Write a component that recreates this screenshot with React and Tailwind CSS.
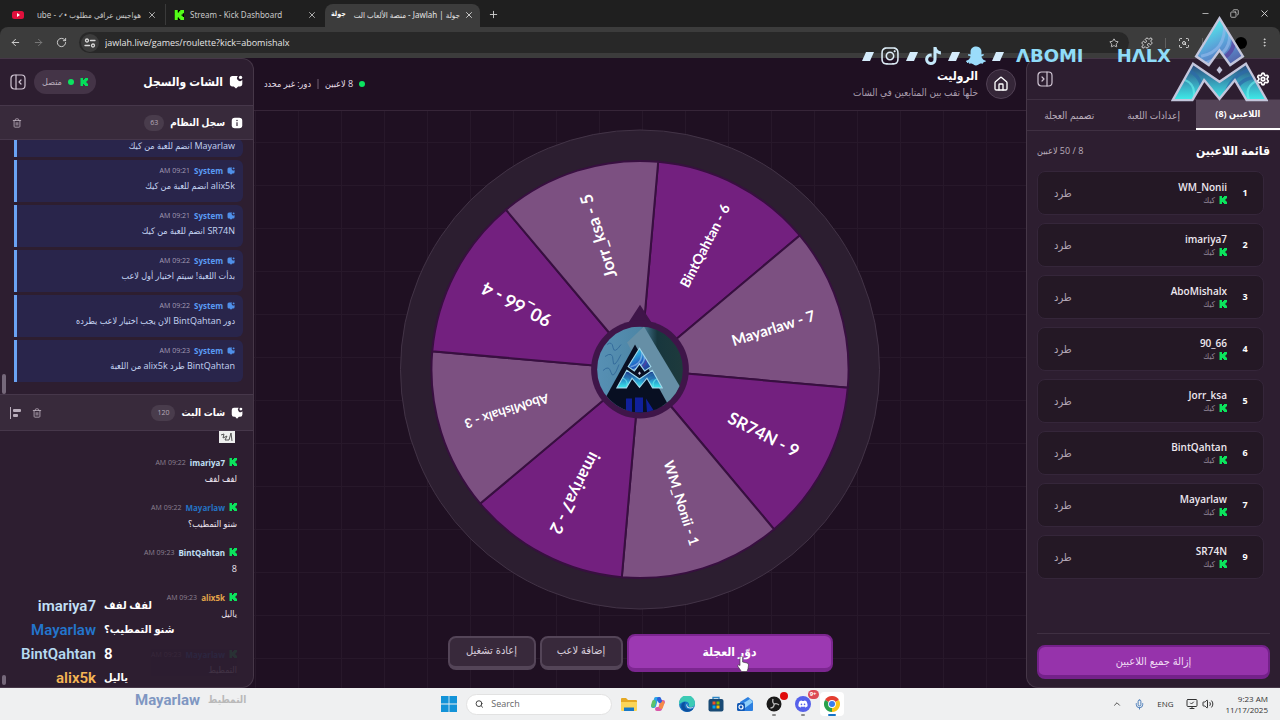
import React from "react";
import {
  ArrowLeft, ArrowRight, RotateCw, X, Plus, Minus, Copy, Star, Puzzle, EllipsisVertical,
  Trash2, House, Search, ChevronUp, Mic, Volume2, Settings, ScanSearch, MonitorCheck,
} from "lucide-react";
import { FaSnapchatGhost, FaTiktok, FaInstagram, FaDiscord } from "react-icons/fa";

const players = [
  { n: 1, name: "WM_Nonii" },
  { n: 2, name: "imariya7" },
  { n: 3, name: "AboMishalx" },
  { n: 4, name: "90_66" },
  { n: 5, name: "Jorr_ksa" },
  { n: 6, name: "BintQahtan" },
  { n: 7, name: "Mayarlaw" },
  { n: 9, name: "SR74N" },
];

const logs = [
  { text: "Mayarlaw انضم للعبة من كيك" },
  { time: "09:21 AM", text: "alix5k انضم للعبة من كيك" },
  { time: "09:21 AM", text: "SR74N انضم للعبة من كيك" },
  { time: "09:22 AM", text: "بدأت اللعبة! سيتم اختيار أول لاعب" },
  { time: "09:22 AM", text: "دور BintQahtan الان يجب اختيار لاعب يطرده" },
  { time: "09:23 AM", text: "BintQahtan طرد alix5k من اللعبة" },
];

const chat = [
  { name: "imariya7", time: "09:22 AM", text: "لفف لفف", color: "text-[#c3e0f7]" },
  { name: "Mayarlaw", time: "09:22 AM", text: "شنو التمطيب؟", color: "text-[#2473c4]" },
  { name: "BintQahtan", time: "09:23 AM", text: "8", color: "text-[#c3e0f7]" },
  { name: "alix5k", time: "09:23 AM", text: "ياليل", color: "text-[#e5a54a]" },
];

const overlay = [
  { name: "imariya7", text: "لفف لفف", color: "text-[#c3e0f7]" },
  { name: "Mayarlaw", text: "شنو التمطيب؟", color: "text-[#2375cc]" },
  { name: "BintQahtan", text: "8", color: "text-[#b5d9f0]", latin: true },
  { name: "alix5k", text: "ياليل", color: "text-[#f5b554]" },
];

const KickIcon = ({ className }) => (
  <svg viewBox="0 0 16 16" className={className} fill="currentColor" aria-hidden="true">
    <path d="M1 0h5v4h2V2h2V0h6v5h-2v2h-2v2h2v2h2v5h-6v-2H8v-2H6v4H1z" />
  </svg>
);

const ChatIcon = ({ className }) => (
  <svg viewBox="0 0 16 16" className={className} fill="currentColor" aria-hidden="true">
    <path d="M4 1h6.200a3 3 0 0 0 5 4.800V10a3 3 0 0 1-3 3h-1.700L8 15.500 5.500 13H4a3 3 0 0 1-3-3V4a3 3 0 0 1 3-3z" />
    <circle cx="13.200" cy="2.800" r="1.900" />
  </svg>
);

const InfoIcon = ({ className }) => (
  <svg viewBox="0 0 16 16" className={className} aria-hidden="true">
    <rect x="1" y="1" width="14" height="14" rx="4" fill="#fff" />
    <circle cx="8" cy="4.800" r="1" fill="#382a3b" />
    <rect x="7.200" y="7" width="1.600" height="5" fill="#382a3b" />
  </svg>
);

const PanelIcon = ({ className, flip }) => (
  <svg viewBox="0 0 16 16" className={className} fill="none" stroke="#cfc4d2" strokeWidth="1.200" strokeLinecap="round" strokeLinejoin="round" aria-hidden="true">
    <rect x="1" y="1" width="14" height="14" rx="3.500" />
    {flip ? <path d="M10 1v14M5 6l2 2-2 2" /> : <path d="M6 1v14M11 6L9 8l2 2" />}
  </svg>
);

const TuneIcon = () => (
  <svg viewBox="0 0 12 12" className="h-3 w-3" fill="none" stroke="currentColor" strokeWidth="1.300" strokeLinecap="round" aria-hidden="true">
    <circle cx="3" cy="3.500" r="1.500" /><path d="M6.500 3.500H11" />
    <circle cx="9" cy="8.500" r="1.500" /><path d="M1 8.500h4.500" />
  </svg>
);

const BrandLogo = ({ className, dark, id, ...rest }) => (
  <svg viewBox="0 0 290 256" className={className} aria-hidden="true" {...rest}>
    <defs>
      <linearGradient id={id + "t"} x1="0" y1="0" x2="1" y2="1">
        <stop offset="0.250" stopColor={dark ? "#35cfe8" : "#52f0ec"} />
        <stop offset="0.550" stopColor={dark ? "#1f63c4" : "#5b9bd6"} />
        <stop offset="0.900" stopColor={dark ? "#22307f" : "#514a96"} />
      </linearGradient>
      <linearGradient id={id + "b"} x1="0" y1="0" x2="0" y2="1">
        <stop offset="0.100" stopColor={dark ? "#1c3a8c" : "#2b5584"} />
        <stop offset="0.600" stopColor={dark ? "#2a9fd0" : "#3aaec4"} />
        <stop offset="1" stopColor="#3ff5ee" />
      </linearGradient>
      <clipPath id={id + "c"}><path d="M145 6l70 114-38 26-32-44-32 44-38-26z" /></clipPath>
      <clipPath id={id + "d"}><path d="M66 142l79 54 79-54 62 109h-60l-35-60-46 56-46-56-35 60H5z" /></clipPath>
    </defs>
    <g clipPath={`url(#${id}c)`}>
      <rect width="290" height="150" fill={`url(#${id}t)`} />
      <path d="M90 120Q165 105 160 20M105 140Q190 105 172 40" stroke="#8fb8ea" strokeWidth="9" fill="none" opacity="0.700" />
      <path d="M130 140Q200 110 185 60" stroke="#5a3f9e" strokeWidth="12" fill="none" opacity="0.700" />
    </g>
    <g clipPath={`url(#${id}d)`}>
      <rect y="140" width="290" height="116" fill={`url(#${id}b)`} />
      <path d="M50 160Q110 190 85 256M250 155Q180 170 160 240M275 185Q215 175 190 225" stroke="#2c6aa8" strokeWidth="10" fill="none" opacity="0.700" />
      <path d="M40 190Q80 205 65 256M262 190Q215 210 235 256" stroke="#6df5f0" strokeWidth="7" fill="none" opacity="0.600" />
    </g>
    <g fill="none" stroke={dark ? "#9fd6ea" : "#c3c6dc"} strokeWidth="7" strokeLinejoin="miter">
      <path d="M145 6l70 114-38 26-32-44-32 44-38-26z" />
      <path d="M66 142l79 54 79-54 62 109h-60l-35-60-46 56-46-56-35 60H5z" />
    </g>
    <path d="M145 150l9 11-9 11-9-11z" fill="#c3c6dc" />
  </svg>
);

const R = 209;
const pt = (deg, r) => {
  const a = (deg * Math.PI) / 180;
  return [241 + r * Math.cos(a), 241 + r * Math.sin(a)];
};

const segments = [
  { label: "BintQahtan - 6", start: -85, size: 14, fill: "#73207f" },
  { label: "Mayarlaw - 7", start: -40, size: 15, fill: "#7c5081" },
  { label: "SR74N - 9", start: 5, size: 17, fill: "#73207f" },
  { label: "WM_Nonii - 1", start: 50, size: 14, fill: "#7c5081" },
  { label: "imariya7 - 2", start: 95, size: 17, fill: "#73207f" },
  { label: "AboMishalx - 3", start: 140, size: 13, fill: "#7c5081" },
  { label: "90_66 - 4", start: 185, size: 18, fill: "#73207f" },
  { label: "Jorr_ksa - 5", start: 230, size: 17, fill: "#7c5081" },
];

const Wheel = () => (
  <svg viewBox="0 0 482 482" className="max-h-[482px] min-h-0 w-full flex-1" role="img" aria-label="عجلة اللاعبين">
    <circle cx="241" cy="241" r="240" fill="#2c1e30" stroke="#423346" strokeWidth="1" />
    {segments.map((s) => {
      const [x1, y1] = pt(s.start, R);
      const [x2, y2] = pt(s.start + 45, R);
      return (
        <path key={s.label} d={`M241 241L${x1} ${y1}A${R} ${R} 0 0 1 ${x2} ${y2}Z`} fill={s.fill} stroke="#380f40" strokeWidth="2" />
      );
    })}
    {segments.map((s) => {
      const a = s.start + 22.5;
      const [x, y] = pt(a, 140);
      return (
        <text key={s.label} x={x} y={y} transform={`rotate(${a} ${x} ${y})`} textAnchor="middle" dominantBaseline="central" direction="ltr" fontSize={s.size} fontWeight="700" fill="#fff" fontFamily="Lato, Inter, sans-serif">
          {s.label}
        </text>
      );
    })}
    <path d="M241 178l11 17h-22z" fill="#3f1549" stroke="#3f1549" strokeWidth="2" />
    <circle cx="241" cy="241" r="49" fill="#3f1549" />
    <defs>
      <clipPath id="hub"><circle cx="241" cy="241" r="43" /></clipPath>
      <linearGradient id="hubBg" x1="0" y1="0" x2="1" y2="0">
        <stop offset="0" stopColor="#5790b4" />
        <stop offset="0.500" stopColor="#4d86a6" />
        <stop offset="0.700" stopColor="#17363d" />
        <stop offset="1" stopColor="#1e3a3c" />
      </linearGradient>
    </defs>
    <g clipPath="url(#hub)">
      <rect x="198" y="198" width="86" height="86" fill="url(#hubBg)" />
      <path d="M245 198L281 258L267 284L228 214z" fill="#668fa6" />
      <path d="M236 216L206 270V286H272L268 274z" fill="#080f22" />
      <path d="M208 216q5-4 6 3t8-3M206 228q8-6 8 4t8-6M204 242q6-6 8 2t8-8" stroke="#356c9c" strokeWidth="1" fill="none" />
      <path d="M227 270h6v14h-6zM236 269h8v15h-8zM247 270l9 14h-8z" fill="#10209a" />
      <BrandLogo id="hubLogo" dark x="217" y="218" width="47" height="43" />
    </g>
  </svg>
);

const Tab = ({ children, className }) => (
  <div className={"flex items-center text-[10px] whitespace-nowrap text-[#c9c9c9] " + className}>{children}</div>
);

const BrowserChrome = () => (
  <header dir="ltr" className="shrink-0 bg-[#1f1f1f] font-['Noto_Sans','DejaVu_Sans_Condensed','DejaVu_Sans',sans-serif]">
    <div className="flex h-[27px] items-end justify-between">
      <div className="flex h-[23px] items-stretch pb-0.5">
        <Tab className="w-[165px] gap-1.5 pr-2 pl-3">
          <svg viewBox="0 0 12 10" className="h-2.5 w-3 shrink-0" aria-hidden="true">
            <rect y="1" width="12" height="8" rx="2.500" fill="#e0103c" />
            <path d="M5 3l3 2-3 2z" fill="#fff" />
          </svg>
          <span dir="rtl" className="flex-1 text-[8px]">هواجيس عراقي مطلوب •✓ - ube</span>
          <button aria-label="إغلاق علامة التبويب"><X size={10} /></button>
        </Tab>
        <Tab className="w-[160px] gap-1.5 border-l border-[#3a3a3a] px-2">
          <span className="flex h-2.5 w-2.5 items-center justify-center bg-black"><KickIcon className="h-2.5 w-2.5 text-[#53fc18]" /></span>
          <span className="flex-1 text-[8px]">Stream - Kick Dashboard</span>
          <button aria-label="إغلاق علامة التبويب"><X size={10} /></button>
        </Tab>
        <Tab className="-mb-0.5 w-[155px] gap-1 rounded-t-lg bg-[#3c3c3c] px-1.5 pb-0.5 text-[#e3e3e3]">
          <span className="text-[7px] font-bold text-white">جولة</span>
          <span dir="rtl" className="flex-1 text-[8px]">جولة | Jawlah - منصة الألعاب الت</span>
          <button aria-label="إغلاق علامة التبويب"><X size={10} /></button>
        </Tab>
        <button aria-label="علامة تبويب جديدة" className="px-2 text-[#d0d0d0]"><Plus size={11} /></button>
      </div>
      <div className="flex h-full items-center gap-5 pr-2.5 text-[#d8d8d8]">
        <button aria-label="تصغير"><Minus size={9} /></button>
        <button aria-label="استعادة"><Copy size={9} className="-scale-x-100" /></button>
        <button aria-label="إغلاق"><X size={11} /></button>
      </div>
    </div>
    <div className="flex h-[31px] items-center gap-3 rounded-t-lg bg-[#3c3c3c] px-2.5 text-[#d8d8d8]">
      <button aria-label="رجوع"><ArrowLeft size={11} /></button>
      <button aria-label="تقدم" className="text-[#7c7c7c]"><ArrowRight size={11} /></button>
      <button aria-label="تحديث"><RotateCw size={11} /></button>
      <div className="flex h-[21px] flex-1 items-center gap-1.5 rounded-full bg-[#282828] pr-2.5 pl-0.5">
        <span className="flex h-[18px] w-[18px] items-center justify-center rounded-full bg-[#3c3c3c]"><TuneIcon /></span>
        <input aria-label="شريط العنوان" readOnly value="jawlah.live/games/roulette?kick=abomishalx" className="min-w-0 flex-1 bg-transparent font-['Open_Sans',sans-serif] text-[9px] text-[#e6e6e6] outline-none" />
        <button aria-label="إضافة إشارة مرجعية"><Star size={10} /></button>
      </div>
      <div className="flex items-center gap-3">
        <button aria-label="الإضافات"><Puzzle size={12} /></button>
        <span className="h-2.5 w-px bg-[#606060]" />
        <button aria-label="بحث في الصفحة"><ScanSearch size={12} /></button>
        <span className="h-2.5 w-px bg-[#606060]" />
        <span className="ml-5 h-3 w-3 rounded-full bg-black" />
        <button aria-label="قائمة"><EllipsisVertical size={11} /></button>
      </div>
    </div>
  </header>
);

const SectionHeader = ({ icon, title, count, children, className }) => (
  <div className={"flex shrink-0 items-center justify-between border-[#46374a] bg-[#382a3b] px-2.5 " + className}>
    <div className="flex items-center gap-1.5">
      {icon}
      <h3 className="text-[10px] font-bold text-white">{title}</h3>
      <span className="rounded-full bg-[#493c4c] px-1.5 py-0.5 text-[7px] leading-3 text-[#b5aab8]">{count}</span>
    </div>
    <div className="flex items-center gap-2.5 text-[#b9adbb]">{children}</div>
  </div>
);

const ChatPanel = () => (
  <aside className="flex w-[254px] shrink-0 flex-col overflow-hidden rounded-r-xl border border-l-0 border-[#463748] bg-[#2d1e30]">
    <div className="flex h-[46px] shrink-0 items-center justify-between px-2.5">
      <div className="flex items-center gap-1.5">
        <ChatIcon className="h-3.5 w-3.5 text-white" />
        <h2 className="text-[12px] font-bold text-white">الشات والسجل</h2>
      </div>
      <div className="flex items-center gap-2">
        <div className="flex h-6 items-center gap-1.5 rounded-full bg-[#443447] px-2 text-[9px] text-[#b9adbb]">
          <KickIcon className="h-2 w-2 text-[#05df5a]" />
          <span className="h-1.5 w-1.5 rounded-full bg-[#0ce360]" />
          <span>متصل</span>
        </div>
        <button aria-label="طي اللوحة"><PanelIcon className="h-4 w-4" /></button>
      </div>
    </div>
    <SectionHeader className="h-[35px] border-y" icon={<InfoIcon className="h-3 w-3" />} title="سجل النظام" count="63">
      <button aria-label="مسح السجل" className="pl-0.5"><Trash2 size={10} /></button>
    </SectionHeader>
    <div className="relative flex h-[254px] shrink-0 flex-col justify-end gap-[3px] overflow-hidden pr-2.5 pb-3 pl-3.5">
      {logs.map((l, i) => (
        <div key={i} className={"flex shrink-0 flex-col gap-0.5 rounded-r-md border-l-[3px] border-[#6aa3f3] bg-[#29254b] px-2 text-[9px] leading-[13px] " + (l.time ? "h-[42px] pt-1" : "h-[18px]")}>
          {l.time && (
            <div className="flex items-center gap-1">
              <ChatIcon className="h-2 w-2 text-[#4f8fe8]" />
              <span className="text-[8px] font-bold text-[#5a9bf3]">System</span>
              <span className="text-[7px] text-[#a39bb5]">{l.time}</span>
            </div>
          )}
          <p className="whitespace-nowrap text-[#c5d4f2]">{l.text}</p>
        </div>
      ))}
      <span className="absolute bottom-0 left-0.5 h-5 w-1 rounded-full bg-[#75687a]" />
    </div>
    <SectionHeader className="h-[37px] border-y" icon={<ChatIcon className="h-3 w-3 text-white" />} title="شات البث" count="120">
      <button aria-label="مسح الشات"><Trash2 size={10} /></button>
      <button aria-label="محاذاة">
        <svg viewBox="0 0 12 12" className="h-3 w-3" fill="currentColor" aria-hidden="true">
          <rect x="0" y="0" width="1" height="12" />
          <rect x="3" y="2" width="8" height="3" rx="1" />
          <rect x="3" y="7" width="5" height="3" rx="1" />
        </svg>
      </button>
    </SectionHeader>
    <div className="relative min-h-0 flex-1 overflow-hidden px-4 text-[9px] leading-[13px]">
      <svg viewBox="0 0 16 12" className="mr-0.5 h-3 w-4" aria-hidden="true">
        <rect width="16" height="12" fill="#eee" />
        <path d="M2 4l3-1-1 4 4-2-2 4h4l2-7 1 8" stroke="#555" strokeWidth="1" fill="none" />
      </svg>
      <div className="flex flex-col gap-[14px] pt-3">
        {chat.map((m) => (
          <div key={m.name} className="flex flex-col gap-[3px]">
            <div className="flex h-[14px] items-center gap-1">
              <KickIcon className="h-2 w-2 text-[#0be35c]" />
              <span className={"text-[8px] font-bold " + m.color}>{m.name}</span>
              <span className="text-[7px] text-[#8c8090]">{m.time}</span>
            </div>
            <p className="h-[14px] text-[#ebe4ee]">{m.text}</p>
          </div>
        ))}
        <div className="flex flex-col gap-0.5 pt-3 opacity-10">
          <div className="flex h-[14px] items-center gap-1">
            <KickIcon className="h-2 w-2 text-[#0be35c]" />
            <span className="text-[8px] font-bold text-[#2473c4]">Mayarlaw</span>
            <span className="text-[7px] text-[#8c8090]">09:23 AM</span>
          </div>
          <p className="text-[#ebe4ee]">التمطيط</p>
        </div>
      </div>
      <span className="absolute bottom-0.5 left-0.5 h-2.5 w-1 rounded-full bg-[#75687a]" />
    </div>
  </aside>
);

const Game = () => (
  <main className="flex min-w-0 flex-1 flex-col bg-[#1f1022] bg-[linear-gradient(to_right,#27182a_1px,transparent_1px),linear-gradient(to_bottom,#27182a_1px,transparent_1px)] bg-size-[43px_43px] bg-position-[1px_-2px]">
    <div className="flex h-[53px] shrink-0 items-center justify-between border-b border-[#362538] bg-[#1f1022] px-2.5">
      <div className="flex items-center gap-2">
        <a href="#home" aria-label="الرئيسية" className="flex h-[30px] w-[30px] items-center justify-center rounded-full border border-[#514054] bg-[#352638] text-white"><House size={16} /></a>
        <div>
          <h1 className="text-[12px] leading-4 font-bold text-white">الروليت</h1>
          <p className="text-[10px] leading-4 text-[#a99dad]">خلها تقب بين المتابعين في الشات</p>
        </div>
      </div>
      <div className="flex items-center gap-1.5 text-[9px] text-[#e5dfe8]">
        <span className="h-1.5 w-1.5 rounded-full bg-[#0ce360]" />
        <span>8 لاعبين</span>
        <span className="h-2.5 w-0.5 bg-[#473749]" />
        <span>دور: غير محدد</span>
      </div>
    </div>
    <div className="flex min-h-0 flex-1 flex-col items-center justify-center pt-[18px]">
      <Wheel />
    </div>
    <div className="flex shrink-0 items-center justify-center gap-1 pt-6 pb-4">
      <button className="h-[38px] w-[206px] rounded-lg border-2 border-b-4 border-[#7c2690] bg-[#9c39b2] text-[12px] font-bold text-white">دوّر العجلة</button>
      <button className="h-[34px] w-[83px] rounded-lg border-2 border-b-4 border-[#544558] bg-[#38293b] pb-1 text-[11px] text-[#d8cfdb]">إضافة لاعب</button>
      <button className="h-[34px] w-[88px] rounded-lg border-2 border-b-4 border-[#544558] bg-[#38293b] pb-1 text-[11px] text-[#d8cfdb]">إعادة تشغيل</button>
    </div>
  </main>
);

const PlayersPanel = () => (
  <aside className="flex w-[254px] shrink-0 flex-col overflow-hidden rounded-l-xl border border-r-0 border-[#463748] bg-[#2d1e30]">
    <div className="flex h-[41px] shrink-0 items-center justify-between border-b border-[#3f3042] px-2.5">
      <button aria-label="الإعدادات" className="text-white"><Settings size={14} strokeWidth={3} /></button>
      <button aria-label="طي اللوحة"><PanelIcon flip className="h-4 w-4" /></button>
    </div>
    <div role="tablist" className="grid h-[31px] shrink-0 grid-cols-3 border-b border-[#3f3042] text-[10px] text-[#b9adbb]">
      <button role="tab" aria-selected="true" className="border-b-2 border-white bg-[#544457] text-[9px] font-bold text-white">اللاعبين (8)</button>
      <button role="tab" aria-selected="false">إعدادات اللعبة</button>
      <button role="tab" aria-selected="false">تصميم العجلة</button>
    </div>
    <div className="flex h-10 shrink-0 items-center justify-between px-2.5">
      <h2 className="text-[12px] font-bold text-white">قائمة اللاعبين</h2>
      <span className="text-[9px] text-[#b9adbb]">8 / 50 لاعبين</span>
    </div>
    <ul className="flex min-h-0 flex-1 flex-col gap-2 overflow-hidden pr-4 pl-2.5">
      {players.map((p) => (
        <li key={p.n} className="flex h-11 shrink-0 items-center rounded-lg border border-[#35263a] bg-[#241825] pr-3 pl-4">
          <span className="w-3 text-center text-[9px] font-bold text-white">{p.n}</span>
          <div className="mr-3 flex-1">
            <div dir="ltr" className="text-right font-['Open_Sans',sans-serif] text-[10px] leading-[13px] font-semibold text-[#eee8f0]">{p.name}</div>
            <div className="flex items-center gap-1 text-[8px] leading-3 text-[#94889a]"><KickIcon className="h-2 w-2 text-[#0be35c]" />كيك</div>
          </div>
          <button className="text-[11px] text-[#b0a4b3]">طرد</button>
        </li>
      ))}
    </ul>
    <div className="mx-2.5 shrink-0 border-t border-[#3f3042] pt-[11px] pb-2">
      <button className="h-[34px] w-full rounded-lg border-2 border-b-4 border-[#74218a] bg-[#9633ab] text-[11px] text-[#f0dcf4]">إزالة جميع اللاعبين</button>
    </div>
  </aside>
);

const Taskbar = () => (
  <footer dir="ltr" className="grid h-8 shrink-0 grid-cols-[1fr_auto_1fr] items-center bg-[#eff0f1] font-['Open_Sans',sans-serif] text-[#333]">
    <span />
    <div className="flex items-center gap-[13px]">
      <button aria-label="Start" className="-mr-1">
        <svg viewBox="0 0 16 16" className="h-4 w-4" fill="#1393d8" aria-hidden="true">
          <path d="M0 0h7.600v7.600H0zM8.400 0H16v7.600H8.400zM0 8.400h7.600V16H0zM8.400 8.400H16V16H8.400z" />
        </svg>
      </button>
      <label className="-mr-1 flex h-[21px] w-[146px] items-center gap-2 rounded-full border border-[#e2e2e2] bg-white px-2">
        <Search size={10} strokeWidth={2.5} />
        <input aria-label="Search" placeholder="Search" className="w-full bg-transparent text-[9px] outline-none placeholder:text-[#666]" />
      </label>
      <button aria-label="File Explorer">
        <svg viewBox="0 0 16 16" className="h-4 w-4" aria-hidden="true">
          <path d="M0 3a1 1 0 0 1 1-1h4l2 2h8a1 1 0 0 1 1 1v9H0z" fill="#e5a823" />
          <path d="M0 6h16v8a1 1 0 0 1-1 1H1a1 1 0 0 1-1-1z" fill="#fbd557" />
          <path d="M3 11.500h10V15H3z" fill="#1878c6" />
        </svg>
      </button>
      <button aria-label="Copilot">
        <svg viewBox="0 0 16 16" className="h-4 w-4" fill="none" strokeWidth="4" strokeLinecap="round" strokeLinejoin="round" aria-hidden="true">
          <path d="M9 3H6L4 10H3" stroke="#2aa3e8" />
          <path d="M3 9.500L4 6" stroke="#5cc26a" />
          <path d="M7 13h3l2-7h1" stroke="#d957a8" />
          <path d="M12.500 7L11 11" stroke="#f58a4b" />
          <path d="M9 3l1 2" stroke="#2f5fd8" />
        </svg>
      </button>
      <button aria-label="Edge">
        <svg viewBox="0 0 16 16" className="h-4 w-4" aria-hidden="true">
          <circle cx="8" cy="8" r="8" fill="#1573c4" />
          <path d="M0 7.500A8 8 0 0 1 16 7c0 3-2 4-4.500 4-2 0-2.500-.8-1.800-1.500C11 7 8 5 5.500 5.500 3 6 .5 7.500 0 9z" fill="#3ccbb5" />
          <path d="M5.500 9c0 4 4 5.500 9 3.500-3 4.500-10 4.500-12-.5C1.500 9 3 6 6.500 6 5.800 7 5.500 8 5.500 9z" fill="#0d4f9e" />
          <path d="M8.500 7.500c-1 2 0 4 3 4 1.500 0 3-.5 3.500-1-1 2.500-6.500 3-7.500-.5-.3-1 .2-2 1-2.500z" fill="#eff0f1" />
        </svg>
      </button>
      <button aria-label="Store">
        <svg viewBox="0 0 16 16" className="h-4 w-4" aria-hidden="true">
          <path d="M5 3V1.500h6V3" stroke="#2f87c8" strokeWidth="1.300" fill="none" />
          <rect x="0.500" y="3" width="15" height="12.500" rx="2" fill="#194a75" />
          <path d="M4.500 5.500h3v3h-3z" fill="#f25022" /><path d="M8.500 5.500h3v3h-3z" fill="#7fba00" />
          <path d="M4.500 9.500h3v3h-3z" fill="#00a4ef" /><path d="M8.500 9.500h3v3h-3z" fill="#ffb900" />
        </svg>
      </button>
      <button aria-label="Outlook">
        <svg viewBox="0 0 16 16" className="h-4 w-4" aria-hidden="true">
          <path d="M3 6l8-5 5 4v9a1 1 0 0 1-1 1H4z" fill="#2b7fe0" />
          <path d="M5 8l8-5 3 3-8 6z" fill="#8fd0fa" />
          <rect x="0" y="7" width="8" height="8" rx="1.500" fill="#1259b5" />
          <circle cx="4" cy="11" r="2" fill="none" stroke="#fff" strokeWidth="1.200" />
        </svg>
      </button>
      <button aria-label="OBS" className="relative">
        <svg viewBox="0 0 16 16" className="h-4 w-4" aria-hidden="true">
          <circle cx="8" cy="8" r="7.500" fill="#191919" />
          <path d="M7 3q-1 4 1.500 5M13 9q-3-2.500-5-.5M4.500 12q4-.5 3.500-4" stroke="#bbb" strokeWidth="1.300" fill="none" />
        </svg>
        <span className="absolute -top-1 -right-1.5 h-2 w-2 rounded-full bg-[#e00b0b]" />
        <span className="absolute -bottom-1 left-1.5 h-0.5 w-1 rounded-full bg-[#8a8a8a]" />
      </button>
      <button aria-label="Discord" className="relative">
        <span className="flex h-4 w-4 items-center justify-center rounded-full bg-[#5661ea] text-white"><FaDiscord size={10} /></span>
        <span className="absolute -top-1.5 -right-2 rounded-full bg-[#dc4a55] px-0.5 text-[6px] leading-[9px] font-bold text-white">9+</span>
        <span className="absolute -bottom-1 left-1.5 h-0.5 w-1 rounded-full bg-[#8a8a8a]" />
      </button>
      <button aria-label="Chrome" className="relative -mx-1 rounded-sm bg-white p-1">
        <svg viewBox="0 0 16 16" className="h-4 w-4" aria-hidden="true">
          <path d="M8 8L1.070 4A8 8 0 0 1 14.930 4z" fill="#e43d30" />
          <path d="M8 8L14.930 4A8 8 0 0 1 8 16z" fill="#fbc418" />
          <path d="M8 8L8 16A8 8 0 0 1 1.070 4z" fill="#2ba24c" />
          <circle cx="8" cy="8" r="3.900" fill="#fff" /><circle cx="8" cy="8" r="3" fill="#3b7ded" />
        </svg>
        <span className="absolute bottom-0 left-2 h-0.5 w-2 rounded-full bg-[#1573c4]" />
      </button>
    </div>
    <div className="flex items-center justify-end gap-3 pr-3 text-[8px]">
      <button aria-label="Show hidden icons"><ChevronUp size={10} /></button>
      <Mic size={11} className="text-[#3d73b5]" />
      <span>ENG</span>
      <span className="flex gap-1"><MonitorCheck size={12} /><Volume2 size={12} /></span>
      <div className="text-right leading-[11px]">
        <div>9:23 AM</div>
        <div>11/17/2025</div>
      </div>
    </div>
  </footer>
);

const Slash = () => (
  <svg viewBox="0 0 12 9" className="h-[9px] w-3" aria-hidden="true"><path d="M4 0h8L8 9H0z" fill="#d5ecfb" /></svg>
);

const StreamBrand = () => (
  <div dir="ltr" className="pointer-events-none absolute top-4 right-3 flex items-start text-[#b4e4fb]">
    <div className="flex h-20 items-center gap-1.5">
      <Slash />
      <FaInstagram size={20} className="text-[#dcebf5]" />
      <Slash />
      <FaTiktok size={18} className="text-[#c5e8fa]" />
      <Slash />
      <FaSnapchatGhost size={20} className="text-[#9bdcfb]" />
      <Slash />
      <span className="flex w-[161px] justify-between pl-1.5 font-['DejaVu_Sans',sans-serif] text-[18px] leading-4 font-bold text-[#8fdcf8]">
        <span>ΛBOMI</span>
        <span>HΛLX</span>
      </span>
    </div>
    <BrandLogo id="streamLogo" className="h-[86px] w-[97px]" />
  </div>
);

const StreamChat = () => (
  <div dir="ltr" className="pointer-events-none absolute bottom-[30px] left-0 grid grid-cols-[96px_auto] gap-x-2 font-[Roboto,'DejaVu_Sans_Condensed','DejaVu_Sans',sans-serif] text-[15px] leading-6 font-semibold text-white">
    {overlay.map((m) => (
      <React.Fragment key={m.name}>
        <span className={"text-right " + m.color}>{m.name}</span>
        <span dir="auto" className={"text-left whitespace-nowrap " + (m.latin ? "text-[15px]" : "text-[11px]")}>{m.text}</span>
      </React.Fragment>
    ))}
  </div>
);

export default function App() {
  return (
    <div className="relative flex h-screen min-h-[600px] w-full flex-col overflow-hidden bg-[#1f1022]">
      <BrowserChrome />
      <div dir="rtl" className="flex min-h-0 flex-1 font-['Open_Sans','DejaVu_Sans_Condensed','DejaVu_Sans',sans-serif]">
        <PlayersPanel />
        <Game />
        <ChatPanel />
      </div>
      <Taskbar />
      <StreamBrand />
      <StreamChat />
      <div dir="ltr" className="pointer-events-none absolute bottom-2 left-[135px] flex items-center gap-2 font-[Roboto,'DejaVu_Sans_Condensed','DejaVu_Sans',sans-serif] text-[15px] leading-6 font-bold text-[#7f97c2]">
        <span>Mayarlaw</span>
        <span className="text-[10px] text-[#b9b9b9]">التمطيط</span>
      </div>
      <svg viewBox="0 0 12 16" className="pointer-events-none absolute bottom-12 left-[calc(50%+97px)] h-4 w-3" aria-hidden="true">
        <path d="M3 1.500a1.300 1.300 0 0 1 2.600 0V6l4.400 1q1.500.4 1.500 2l-.5 3.500-1 3H4.500L1 10.500q-.6-1.500.6-1.700L3 9.500z" fill="#fff" stroke="#333" strokeWidth=".6" />
      </svg>
    </div>
  );
}
